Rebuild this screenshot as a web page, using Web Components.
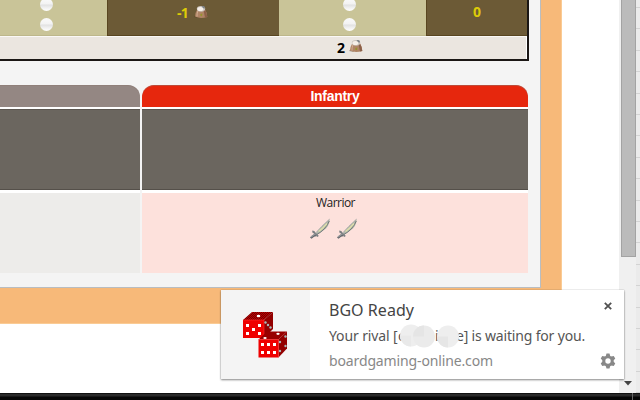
<!DOCTYPE html>
<html lang="en"><head><meta charset="utf-8"><title>BGO</title>
<style>html,body{margin:0;height:100%;overflow:hidden;background:#fff}</style></head><body>
<game-window></game-window>
<script>
const define=(name,html,after)=>customElements.define(name,class extends HTMLElement{
  connectedCallback(){
    if(this.shadowRoot)return;
    this.attachShadow({mode:'open'}).innerHTML=html;
    if(after)after.call(this,this.shadowRoot);
  }
});
// One line of text, spaced to fill the width in its "w" attribute.
define('fit-line',`<style>:host{display:block;white-space:pre}span{display:inline-block}</style><span></span>`,function(r){
  const s=r.querySelector('span'),t=this.getAttribute('text');
  s.textContent=t;
  const w=+this.getAttribute('w');
  s.style.letterSpacing=(w-s.getBoundingClientRect().width)/t.length+'px';
});
define('white-pearl',`<style>:host{display:block;width:13px;height:13px;border-radius:50%;background:linear-gradient(#fafafa 0,#f3f3f3 45%,#e2e2e2 54%,#eee 72%,#fff 100%)}</style>`);
define('supply-bag',`<style>:host{display:block;width:14px;height:14px}svg{display:block}</style>
<svg width="14" height="14" viewBox="0 0 14 14"><path d="M0 12Q1.5 10 3 10L5 13Z" fill="#4d3a22" opacity=".5"/><path d="M3.2 4.5Q1 8 1 11.5Q6 14.2 13.3 12Q13 7 10.8 4Z" fill="#b08465"/><path d="M9.4 5L11 4.5Q13 8 13.3 12L11 12.6Z" fill="#8c6048"/><path d="M3.8 6Q2.8 9 3 11.6" stroke="#d2ae92" fill="none"/><ellipse cx="7" cy="3.8" rx="4.2" ry="2.9" fill="#c9c2bb"/><ellipse cx="6.4" cy="3.9" rx="3" ry="2" fill="#f6efe8"/><path d="M7.5 1L10.3 1.2L11.2 3.4L9.2 3.2Z" fill="#7b8085"/><path d="M6.4 9L8.4 8.4L8 11.2L6.4 10.8Z" fill="#97932c"/></svg>`);
define('sword-icon',`<style>:host{display:block;width:22px;height:22px}svg{display:block}</style>
<svg width="22" height="22" viewBox="0 0 22 22"><path d="M6 16Q11 10 20.6 1Q20.8 6.5 17 10.5Q12.5 14.2 7.5 17Z" fill="#b3b8ab"/><path d="M7.5 16.7Q16.5 12 20.3 3" stroke="#737b7b" fill="none"/><path d="M7 14.6Q12 8.8 20.5 1.2" stroke="#9ba19f" stroke-width=".8" fill="none"/><path d="M9.5 13.5Q14 10.5 18 5.5" stroke="#dedfaa" stroke-width="1.3" fill="none"/><path d="M1 19.5Q3 17 5.5 16L8 18Q5 18 2.5 20.8Z" fill="#62656a"/><path d="M3.3 13.5Q5 13.5 6 15.5Q8 16.6 9 18.5" stroke="#7b7e82" stroke-width="1.8" fill="none"/><path d="M2 19L6 16" stroke="#96999c" stroke-width="1.2"/></svg>`);
define('resource-table',`<style>
:host{display:grid;box-sizing:border-box;width:529px;height:61px;grid-template-columns:107px 172px 147px 101px;grid-template-rows:36px 23px;border-right:2px solid #1b1715;border-bottom:2px solid #1b1715;background:#ebe6e0}
.c{display:flex;justify-content:center;box-sizing:border-box;font:bold 14px/16px "Open Sans",sans-serif;color:#ddcb08}
.l{background:#c9c498;border-bottom:1px solid #bdb78b}.d{background:#6c5a36;border:solid #594620;border-width:0 0 1px 1px}
.p{display:flex;flex-direction:column;align-items:center;gap:7px;margin-top:-2px}
.t{grid-row:2;box-shadow:inset 0 1px #faf8f6;color:#000}
.last{box-shadow:inset 0 1px #faf8f6,inset -1px 0 #fff}
</style>
<div class="c l" style="padding-right:15px"><div class="p"><white-pearl></white-pearl><white-pearl></white-pearl></div></div>
<div class="c d" style="gap:6px;padding:5px 2px 0 0"><fit-line w="11" text="-1"></fit-line><supply-bag></supply-bag></div>
<div class="c l" style="padding-right:6px"><div class="p"><white-pearl></white-pearl><white-pearl></white-pearl></div></div>
<div class="c d" style="padding-top:4px"><fit-line w="8" text="0"></fit-line></div>
<div class="c t"></div><div class="c t"></div><div class="c t" style="padding:4px 5px 0 0;gap:4px"><fit-line w="8" text="2"></fit-line><supply-bag style="margin-top:-1px"></supply-bag></div><div class="c t last"></div>`);
define('unit-column',`<style>
:host{display:grid;grid-template-rows:22px 2px 81px 3px 80px;width:var(--w);height:188px}
.h{background:var(--head);border-radius:var(--r);text-align:center;color:#fff;font:bold 14px/22px "Liberation Sans",sans-serif;box-shadow:inset 0 1px rgba(140,120,110,.45)}
.g{background:#fff}.m{background:#6b665f;box-shadow:inset 0 1px #5b5650,inset 0 -1px #55504a}
.b{background:var(--body)}
</style><div class="h"><slot name="head"></slot></div><div class="g"></div><div class="m"></div><div class="g"></div><div class="b"><slot></slot></div>`);
define('page-scrollbar',`<style>:host{display:flex;height:393px;width:21px;background:#f0f0f0;justify-content:space-between}
.t{display:flex;flex-direction:column;justify-content:space-between;align-items:center;width:17px}
.b{box-sizing:border-box;width:15px;height:257px;margin-left:2px;background:#bbb;border:1px solid #a3a3a3;border-top:0}
svg{display:block;margin:0 0 7px 0}
.s{width:4px;background:repeating-linear-gradient(transparent 0 7px,#d3d3d3 7px 8px,transparent 8px 21.4px),#ebebeb}</style>
<div class="t"><div class="b"></div><svg width="8" height="5"><path d="M0 0H8L4 4.5Z" fill="#444"/></svg></div><div class="s"></div>`);
// Pixel dice: two cubes with patterned tops.
define('dice-icon',`<style>:host{display:block}svg{display:block}</style>
<svg width="46" height="46" viewBox="0 0 46 46"><defs><pattern id="p" width="2" height="2" patternUnits="userSpaceOnUse"><rect width="2" height="2" fill="#bd0000"/><path d="M0 0h1v1H0zM1 1h1v1H1z" fill="#720000"/></pattern>
<g id="d"><path d="M0 8L9 0H30L21 8Z" fill="url(#p)"/><path d="M21 8L30 0V17L21 26Z" fill="#930000"/><path d="M0 8H21V26H0Z" fill="#ef0000"/><path d="M0 8H21V26" fill="none" stroke="#ff3030" stroke-width=".6"/></g></defs>
<use href="#d"/><g fill="#fff"><path d="M3 12h3v3H3zM15 12h3v3h-3zM9 16h3v3H9zM3 20h3v3H3zM15 20h3v3h-3z"/><ellipse cx="15.5" cy="4" rx="1.8" ry="1.2"/></g><g fill="#a8b8b8"><circle cx="22.5" cy="10.5" r="1.2"/><circle cx="25" cy="13" r="1.2"/><circle cx="27.5" cy="15.5" r="1.2"/></g>
<use href="#d" transform="translate(15.5 19.5) scale(.95 1)"/><g fill="#fff"><path d="M18 31h3v3h-3zM24 31h3v3h-3zM30 31h3v3h-3zM18 39h3v3h-3zM24 39h3v3h-3zM30 39h3v3h-3z"/><ellipse cx="22" cy="26" rx="1.7" ry="1.1"/><ellipse cx="35" cy="21.8" rx="1.7" ry="1.1"/></g><g fill="#a8b8b8"><circle cx="37" cy="30" r="1.2"/><circle cx="42.5" cy="24.5" r="1.2"/><circle cx="37" cy="39" r="1.2"/><circle cx="42.5" cy="34" r="1.2"/></g></svg>`);
define('desktop-toast',`<style>
:host{display:flex;width:403px;height:89px;background:#fff;box-shadow:0 1px 2px rgba(0,0,0,.45),0 0 1px rgba(0,0,0,.25);font-family:"Noto Sans",sans-serif;color:#555}
.i{width:89px;background:#f4f4f4;display:flex;align-items:center;justify-content:center;box-sizing:border-box}
.x{flex:1;display:flex;flex-direction:column;padding:8px 0 0 19px}
.a{font-size:16px;line-height:24px;color:#444}.m{position:relative;display:flex;font-size:14px;line-height:28px}.u{font-size:14px;line-height:21px;color:#888}
.k{position:absolute;left:69px;top:2px}
.c{width:32px;display:flex;flex-direction:column;justify-content:space-between;align-items:center;padding:12px 1px 10px 0;box-sizing:border-box}
svg{display:block}
</style><div class="i"><dice-icon></dice-icon></div>
<div class="x"><fit-line class="a" w="85" text="BGO Ready"></fit-line>
<div class="m"><fit-line w="64" text="Your rival "></fit-line><fit-line w="12" text="[c"></fit-line><fit-line style="margin-left:30px" w="4" text="i"></fit-line><fit-line style="margin-left:17px" w="129" text="e] is waiting for you."></fit-line>
<svg class="k" width="66" height="24"><circle cx="13" cy="11.5" r="11" fill="#eee"/><path d="M13 11.5V22.5A11 11 0 0 1 2 11.5Z" fill="#e9e9e9"/><circle cx="26" cy="12.5" r="11" fill="#ebebeb"/><path d="M26 12.5V1.5A11 11 0 0 0 15 12.5Z" fill="#e5e5e5"/><circle cx="50" cy="12.5" r="11" fill="#eee"/><path d="M50 12.5V23.5A11 11 0 0 1 39 12.5Z" fill="#e6e6e6"/></svg></div>
<fit-line class="u" w="164" text="boardgaming-online.com"></fit-line></div>
<div class="c"><svg width="8" height="8"><path d="M.8.8L7.2 7.2M7.2.8L.8 7.2" stroke="#505050" stroke-width="1.8"/></svg>
<svg width="16" height="16" viewBox="-8 -8 16 16"><g fill="#888"><g id="t"><path d="M-2.2-5L-1.5-7.5H1.5L2.2-5V5L1.5 7.5H-1.5L-2.2 5Z"/></g><use href="#t" transform="rotate(60)"/><use href="#t" transform="rotate(120)"/><circle r="5.6"/></g><circle r="2.7" fill="#fff"/></svg></div>`);
define('game-window',`<style>
:host{display:block;position:relative;width:640px;height:400px;background:#fff;overflow:hidden}
.top{display:flex;height:393px;justify-content:space-between}
.o{box-sizing:border-box;width:562px;height:324px;background:#f7b979;border:solid #facb94;border-width:0 1px 1px 0}
.p{box-sizing:border-box;width:541px;height:288px;background:#f4f4f4;border:solid #b9bdc1;border-width:0 1px 1px 0}
.cols{display:flex;gap:2px;margin-top:24px}
.grey{--w:140px;--head:#948783;--body:#edecea;--r:0 12px 0 0}.red{--w:386px;--head:#e6270d;--body:#fde1dc;--r:12px 12px 0 0}
.w{display:flex;flex-direction:column;align-items:center;font:12px/20px "Open Sans",sans-serif;color:#222}
.s{display:flex;gap:5px;margin-top:5px;padding-right:3px}
.hd{display:flex;justify-content:center}
.task{height:7px;background:linear-gradient(#111 0 1px,#292929 1px 3px,#050505 4px);display:flex;justify-content:flex-end}
.task i{width:1px;height:7px;background:#666;margin-right:7px}
desktop-toast{position:absolute;left:221px;top:290px}
</style><div class="top"><div class="o"><div class="p"><resource-table></resource-table>
<div class="cols"><unit-column class="grey"></unit-column><unit-column class="red"><div class="hd" slot="head"><fit-line w="49" text="Infantry"></fit-line></div><div class="w"><fit-line w="39" text="Warrior" style="margin-left:1px"></fit-line><div class="s"><sword-icon></sword-icon><sword-icon></sword-icon></div></div></unit-column></div></div></div>
<page-scrollbar></page-scrollbar></div><div class="task"><i></i></div><desktop-toast></desktop-toast>`);
</script></body></html>
